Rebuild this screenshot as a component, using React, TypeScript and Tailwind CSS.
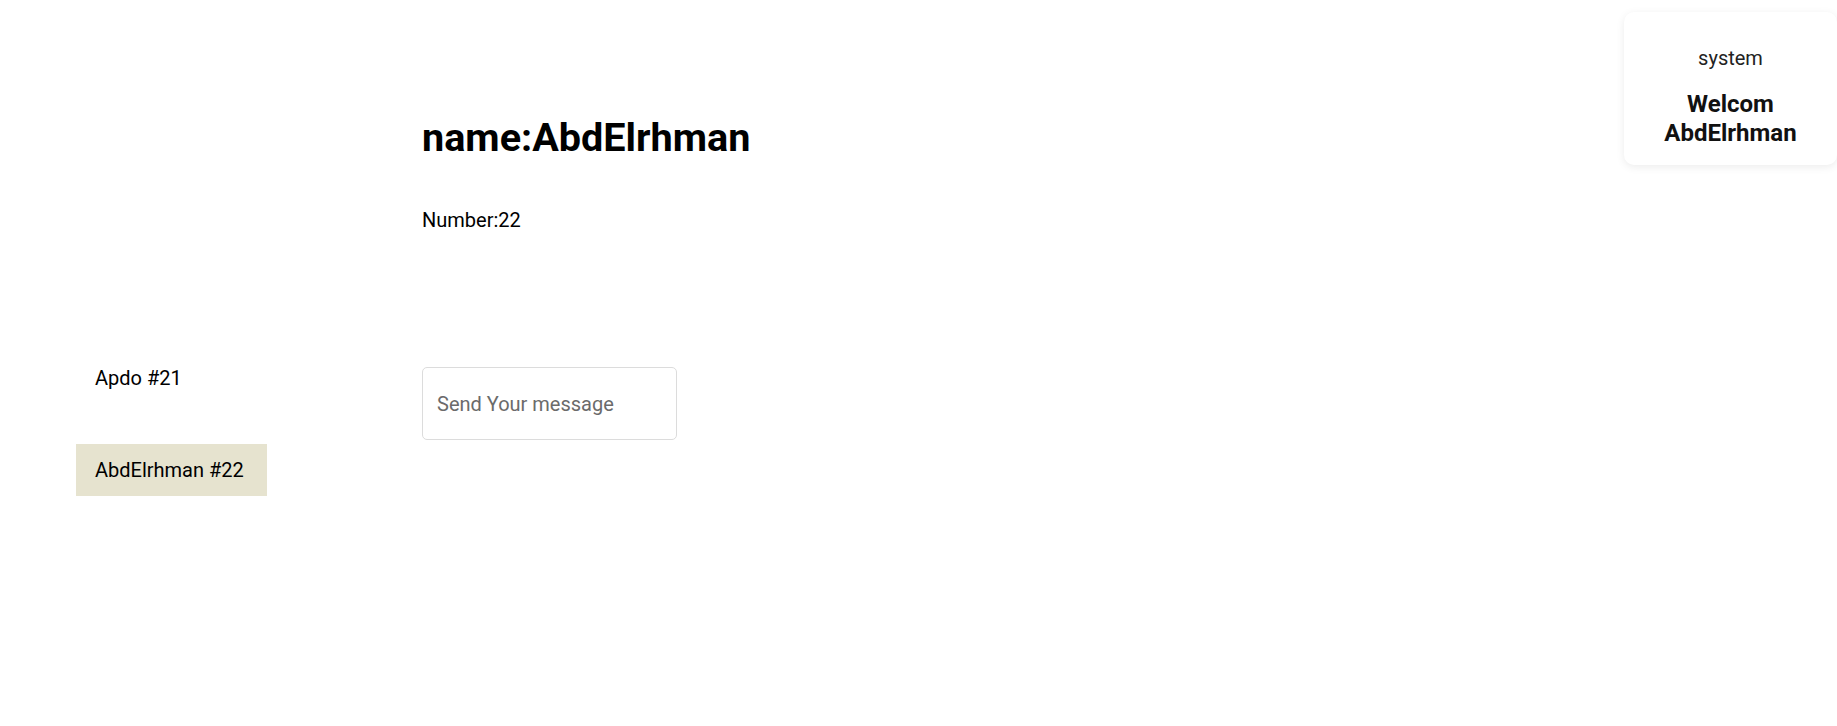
export default function App() {
  const users = [
    { name: "Apdo", id: 21, active: false },
    { name: "AbdElrhman", id: 22, active: true },
  ];

  return (
    <div className="relative min-h-[726px] bg-white font-['Roboto',sans-serif] text-black">
      {/* welcome card */}
      <div className="absolute right-0 top-[12px] flex h-[153px] w-[213px] flex-col items-center rounded-[10px] bg-white pt-[31px] shadow-[0_2px_8px_rgba(0,0,0,0.08)]">
        <p className="text-[20px] leading-[30px] text-[#222]">system</p>
        <h3 className="mt-[17px] text-center text-[24px] font-bold leading-[29px] text-[#111]">
          Welcom
          <br />
          AbdElrhman
        </h3>
      </div>

      <div className="flex">
        <aside className="ml-[76px] mt-[352px] flex w-[191px] flex-col gap-[40px]">
          {users.map((u) => (
            <div
              key={u.id}
              className={`flex h-[52px] items-center px-[19px] text-[20px] ${
                u.active ? "bg-[#e6e3cf]" : ""
              }`}
            >
              {u.name} #{u.id}
            </div>
          ))}
        </aside>

        <main className="ml-[155px] flex flex-col pt-[114px]">
          <h1 className="text-[39.6px] font-bold leading-[48px]">name:AbdElrhman</h1>
          <p className="mt-[43px] text-[20px] leading-[30px]">Number:22</p>
          <input
            type="text"
            placeholder="Send Your message"
            className="mt-[132px] h-[73px] w-[255px] rounded-[5px] border border-[#dcdcdc] px-[14px] text-[20px] outline-none placeholder:text-[#6b6b6b]"
          />
        </main>
      </div>
    </div>
  );
}
